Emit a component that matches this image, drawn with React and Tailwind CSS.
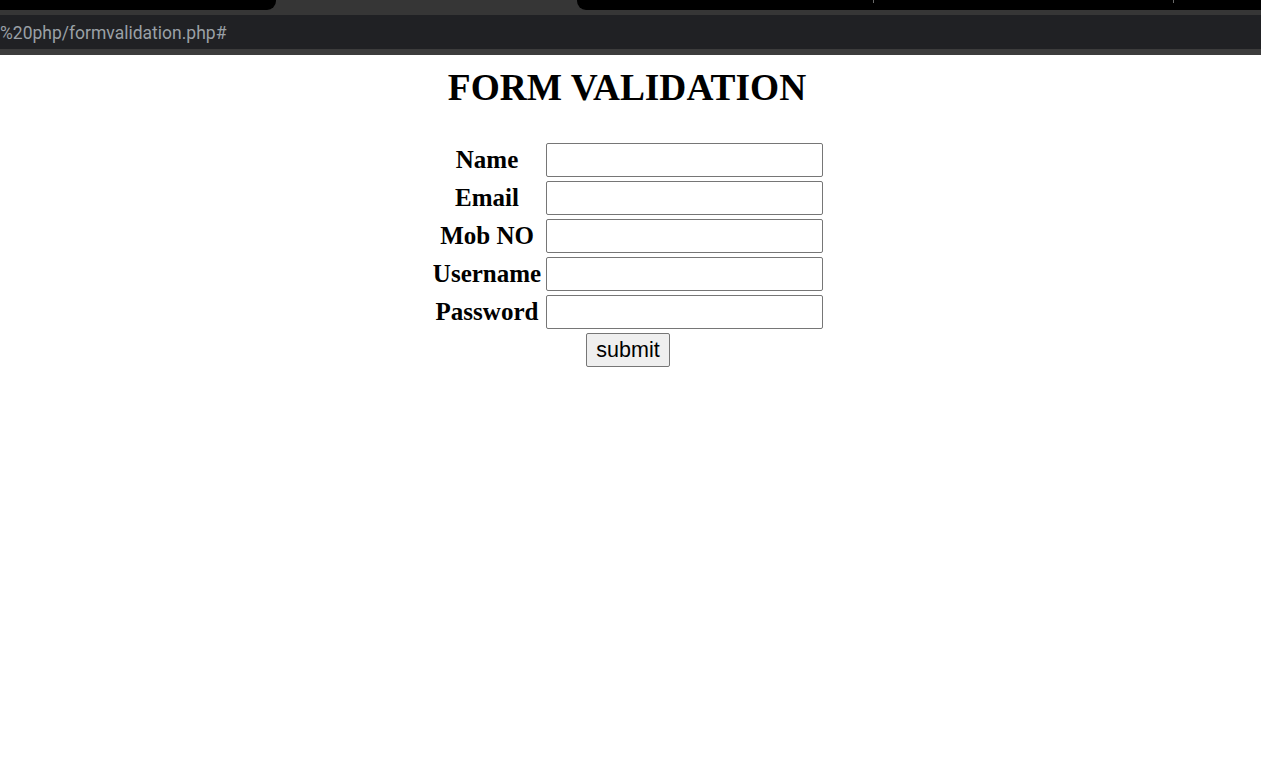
export default function App() {
  const fields = ["Name", "Email", "Mob NO", "Username", "Password"];
  return (
    <div className="w-[1261px] h-[761px] bg-white overflow-hidden">
      {/* browser chrome */}
      <div className="flex h-[10px] bg-[#363636]">
        <div className="w-[276px] h-full bg-black rounded-br-[9px]" />
        <div className="w-[301px] h-full" />
        <div className="flex-1 h-full bg-black rounded-bl-[9px] flex items-start pl-[296px] gap-[299px]">
          <div className="w-px h-[3px] bg-[#6a6a6a]" />
          <div className="w-px h-[3px] bg-[#6a6a6a]" />
        </div>
      </div>
      <div className="h-[5px] bg-[#363636]" />
      <div className="h-[34px] bg-[#202124] flex items-center pt-[3px]">
        <span
          className="text-[17.5px] text-[#9aa0a6] leading-none"
          style={{ fontFamily: "Roboto, 'Open Sans', sans-serif" }}
        >
          %20php/formvalidation.php#
        </span>
      </div>
      <div className="h-[6px] bg-[#3c3c3c]" />

      {/* page */}
      <div className="flex flex-col items-center pr-[7px] pt-[12px]" style={{ fontFamily: "'Liberation Serif', 'Times New Roman', serif" }}>
        <h1 className="text-[37.4px] leading-[41px] font-bold text-black">FORM VALIDATION</h1>
        <div className="mt-[35px] grid grid-cols-[112px_277px] gap-x-[3px] gap-y-[4px]">
          {fields.map((f) => (
            <div key={f} className="contents">
              <div className="h-[34px] flex items-center justify-center text-[25px] font-bold text-black whitespace-nowrap">
                {f}
              </div>
              <input
                type="text"
                className="h-[34px] w-[277px] border border-[#767676] rounded-[2px] bg-white outline-none"
              />
            </div>
          ))}
        </div>
        <button
          className="mt-[4px] ml-[2px] h-[34px] w-[84px] pt-[2px] bg-[#efefef] border border-[#767676] rounded-[2px] text-[21.5px] text-black leading-none flex items-center justify-center"
          style={{ fontFamily: "'Liberation Sans', Arial, sans-serif" }}
        >
          submit
        </button>
      </div>
    </div>
  );
}
